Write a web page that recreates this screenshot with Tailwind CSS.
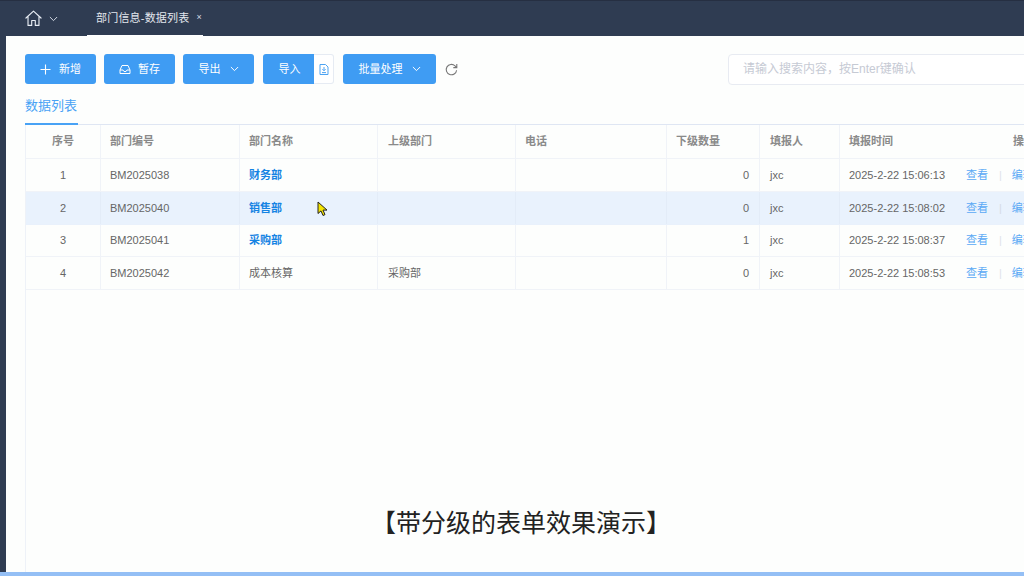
<!DOCTYPE html>
<html lang="zh-CN">
<head>
    <meta charset="UTF-8" />
    <meta name="viewport" content="width=device-width, initial-scale=1.0" />
    <script src="https://cdn.jsdelivr.net/npm/@tailwindcss/browser@4"></script>
    <title>部门信息-数据列表</title>
</head>
<body class="relative w-[1024px] h-[576px] overflow-hidden bg-[#2f3c52] font-['Liberation_Sans','Noto_Sans_CJK_SC',sans-serif]">
    <!-- top bar -->
    <div class="h-[36px] flex border-t border-[#262f42] border-b-[#4a5568]">
        <div class="flex items-center pl-[25px] w-[87px] gap-[7px]">
            <svg class="w-[17px] h-[17px] text-[#e8edf4]" viewBox="0 0 18 18" fill="none" stroke="currentColor" stroke-width="1.2" stroke-linejoin="round" stroke-linecap="round">
                <path d="M1 8.5 9 1.2l8 7.3M3.2 7v9.3h3.9v-5.2h3.8v5.2h3.9V7" />
            </svg>
            <svg class="w-[9px] h-[6px] text-[#d5dbe5]" viewBox="0 0 10 6" fill="none" stroke="currentColor" stroke-width="1.1"><path d="M1 .8l4 4 4-4" /></svg>
        </div>
        <div class="w-[116px] h-[35px] border-b-[1px] border-white flex items-center pl-[9px] text-[11px] text-[#e3e7ee] gap-[7px]">
            <span class="tracking-[0.2px]">部门信息-数据列表</span>
            <span class="text-[9px] text-[#d5dbe5]">×</span>
        </div>
    </div>

    <!-- main panel -->
    <div class="absolute left-[6px] top-[36px] w-[1018px] h-[536px] bg-[#fdfefd]">
        <div class="flex items-center h-[30px] ml-[19px] mt-[18px] absolute top-0 left-0 w-[999px]">
            <button class="shrink-0 w-[71px] h-[30px] rounded-[3px] bg-[#3f9cf3] text-white text-[11px] flex items-center justify-center gap-[8px]">
                <svg class="w-[11px] h-[11px]" viewBox="0 0 11 11" stroke="currentColor" stroke-width="1.1"><path d="M5.5.5v10M.5 5.5h10" /></svg>
                新增
            </button>
            <button class="shrink-0 ml-[8px] w-[71px] h-[30px] rounded-[3px] bg-[#3f9cf3] text-white text-[11px] flex items-center justify-center gap-[7px]">
                <svg class="w-[12px] h-[11px]" viewBox="0 0 12 11" fill="none" stroke="currentColor" stroke-width="1"><path d="M1 6l2-4.5h6L11 6v3.5H1zM1 6h3l1 1.5h2L8 6h3" /></svg>
                暂存
            </button>
            <button class="shrink-0 ml-[8px] w-[71px] h-[30px] rounded-[3px] bg-[#3f9cf3] text-white text-[11px] flex items-center justify-center gap-[9px]">
                导出
                <svg class="w-[9px] h-[6px]" viewBox="0 0 10 6" fill="none" stroke="currentColor" stroke-width="1.1"><path d="M1 .8l4 4 4-4" /></svg>
            </button>
            <div class="shrink-0 ml-[9px] flex h-[30px]">
                <button class="w-[51px] h-[30px] rounded-l-[3px] bg-[#3f9cf3] text-white text-[11px] pl-[2px]">导入</button>
                <button class="w-[20px] h-[30px] rounded-r-[3px] border border-l-0 border-[#e6ebf3] bg-white flex items-center justify-center">
                    <svg class="w-[10px] h-[11px] text-[#4da3f2]" viewBox="0 0 10 11" fill="none" stroke="currentColor" stroke-width="1"><path d="M1 .5h5.5L9 3v7.5H1z" /><path d="M5 3v3.4M3.4 5.2 5 6.8l1.6-1.6M3 8.6h4" /></svg>
                </button>
            </div>
            <button class="shrink-0 ml-[9px] w-[93px] h-[30px] rounded-[3px] bg-[#3f9cf3] text-white text-[11px] flex items-center justify-center gap-[9px]">
                批量处理
                <svg class="w-[9px] h-[6px]" viewBox="0 0 10 6" fill="none" stroke="currentColor" stroke-width="1.1"><path d="M1 .8l4 4 4-4" /></svg>
            </button>
            <svg class="shrink-0 ml-[9px] w-[13px] h-[13px] text-[#777]" viewBox="0 0 13 13" fill="none" stroke="currentColor" stroke-width="1.1"><path d="M11.6 7.2A5.2 5.2 0 1 1 10 2.8l1.6 1.6M11.8 1v3.6H8.3" /></svg>
            <div class="shrink-0 ml-[270px] w-[300px] h-[31px] rounded-[4px] border border-[#e8ebf2] bg-white flex items-center pl-[14px] text-[12px] text-[#c6cad4]">请输入搜索内容，按Enter键确认</div>
        </div>

        <!-- tab title -->
        <div class="absolute left-[19px] top-[60px] w-[999px] h-[29px] border-b border-[#dfe6f3] flex">
            <span class="w-[53px] h-[29px] shrink-0 border-b-2 border-[#48a2f5] text-[13px] leading-[20px] text-[#48a2f5]">数据列表</span>
        </div>

        <!-- table -->
        <div class="absolute left-[19px] top-[89px] w-[999px] h-[447px] border-l border-[#eef2f8] text-[11px] text-[#666]">
            <div class="grid grid-cols-[75px_139px_138px_138px_151px_93px_80px_117px_70px] h-[34px] border-b border-[#f0f3f8] items-center font-bold text-[#8a8a8a]">
                <div class="h-full flex items-center justify-center border-r border-[#f0f3f8]">序号</div>
                <div class="h-full flex items-center pl-[9px] border-r border-[#f0f3f8]">部门编号</div>
                <div class="h-full flex items-center pl-[9px] border-r border-[#f0f3f8]">部门名称</div>
                <div class="h-full flex items-center pl-[10px] border-r border-[#f0f3f8]">上级部门</div>
                <div class="h-full flex items-center pl-[9px] border-r border-[#f0f3f8]">电话</div>
                <div class="h-full flex items-center pl-[9px] border-r border-[#f0f3f8]">下级数量</div>
                <div class="h-full flex items-center pl-[10px] border-r border-[#f0f3f8]">填报人</div>
                <div class="h-full flex items-center pl-[9px]">填报时间</div>
                <div class="h-full flex items-center pl-[56px] whitespace-nowrap">操作</div>
            </div>

            <div class="grid grid-cols-[75px_139px_138px_138px_151px_93px_80px_117px_70px] h-[33px] border-b border-[#f0f3f8] items-center">
                <div class="h-full flex items-center justify-center border-r border-[#f0f3f8]">1</div>
                <div class="h-full flex items-center pl-[9px] border-r border-[#f0f3f8]">BM2025038</div>
                <div class="h-full flex items-center pl-[9px] border-r border-[#f0f3f8] font-bold text-[#1583e3]">财务部</div>
                <div class="h-full flex items-center pl-[10px] border-r border-[#f0f3f8]"></div>
                <div class="h-full flex items-center pl-[10px] border-r border-[#f0f3f8]"></div>
                <div class="h-full flex items-center justify-end pr-[10px] border-r border-[#f0f3f8]">0</div>
                <div class="h-full flex items-center pl-[10px] border-r border-[#f0f3f8]">jxc</div>
                <div class="h-full flex items-center pl-[9px] whitespace-nowrap">2025-2-22 15:06:13</div>
                <div class="h-full flex items-center pl-[9px] whitespace-nowrap text-[#5aa9f5]">查看<span class="ml-[11px] mr-[10px] text-[#dfe3ea]">|</span>编辑</div>
            </div>

            <div class="grid grid-cols-[75px_139px_138px_138px_151px_93px_80px_117px_70px] h-[33px] border-b border-[#e9f1fc] items-center bg-[#e9f2fd]">
                <div class="h-full flex items-center justify-center border-r border-[#e3ecf8]">2</div>
                <div class="h-full flex items-center pl-[9px] border-r border-[#e3ecf8]">BM2025040</div>
                <div class="h-full flex items-center pl-[9px] border-r border-[#e3ecf8] font-bold text-[#1583e3]">销售部</div>
                <div class="h-full flex items-center pl-[10px] border-r border-[#e3ecf8]"></div>
                <div class="h-full flex items-center pl-[10px] border-r border-[#e3ecf8]"></div>
                <div class="h-full flex items-center justify-end pr-[10px] border-r border-[#e3ecf8]">0</div>
                <div class="h-full flex items-center pl-[10px] border-r border-[#e3ecf8]">jxc</div>
                <div class="h-full flex items-center pl-[9px] whitespace-nowrap">2025-2-22 15:08:02</div>
                <div class="h-full flex items-center pl-[9px] whitespace-nowrap text-[#5aa9f5]">查看<span class="ml-[11px] mr-[10px] text-[#d5dbe5]">|</span>编辑</div>
            </div>

            <div class="grid grid-cols-[75px_139px_138px_138px_151px_93px_80px_117px_70px] h-[32px] border-b border-[#f0f3f8] items-center">
                <div class="h-full flex items-center justify-center border-r border-[#f0f3f8]">3</div>
                <div class="h-full flex items-center pl-[9px] border-r border-[#f0f3f8]">BM2025041</div>
                <div class="h-full flex items-center pl-[9px] border-r border-[#f0f3f8] font-bold text-[#1583e3]">采购部</div>
                <div class="h-full flex items-center pl-[10px] border-r border-[#f0f3f8]"></div>
                <div class="h-full flex items-center pl-[10px] border-r border-[#f0f3f8]"></div>
                <div class="h-full flex items-center justify-end pr-[10px] border-r border-[#f0f3f8]">1</div>
                <div class="h-full flex items-center pl-[10px] border-r border-[#f0f3f8]">jxc</div>
                <div class="h-full flex items-center pl-[9px] whitespace-nowrap">2025-2-22 15:08:37</div>
                <div class="h-full flex items-center pl-[9px] whitespace-nowrap text-[#5aa9f5]">查看<span class="ml-[11px] mr-[10px] text-[#dfe3ea]">|</span>编辑</div>
            </div>

            <div class="grid grid-cols-[75px_139px_138px_138px_151px_93px_80px_117px_70px] h-[33px] border-b border-[#f0f3f8] items-center">
                <div class="h-full flex items-center justify-center border-r border-[#f0f3f8]">4</div>
                <div class="h-full flex items-center pl-[9px] border-r border-[#f0f3f8]">BM2025042</div>
                <div class="h-full flex items-center pl-[9px] border-r border-[#f0f3f8]">成本核算</div>
                <div class="h-full flex items-center pl-[10px] border-r border-[#f0f3f8]">采购部</div>
                <div class="h-full flex items-center pl-[10px] border-r border-[#f0f3f8]"></div>
                <div class="h-full flex items-center justify-end pr-[10px] border-r border-[#f0f3f8]">0</div>
                <div class="h-full flex items-center pl-[10px] border-r border-[#f0f3f8]">jxc</div>
                <div class="h-full flex items-center pl-[9px] whitespace-nowrap">2025-2-22 15:08:53</div>
                <div class="h-full flex items-center pl-[9px] whitespace-nowrap text-[#5aa9f5]">查看<span class="ml-[11px] mr-[10px] text-[#dfe3ea]">|</span>编辑</div>
            </div>
        </div>
    </div>

    <!-- bottom bar -->
    <div class="absolute left-0 bottom-0 w-[1024px] h-[4px] bg-[#94bff5]"></div>

    <!-- caption over the recording -->
    <div class="absolute left-[371px] top-[507px] text-[25px] leading-[32px] whitespace-nowrap text-[#222]">【带分级的表单效果演示】</div>

    <!-- mouse pointer -->
    <svg class="absolute left-[317px] top-[201px] w-[12px] h-[16px]" viewBox="0 0 12 16">
        <path d="M1 1v11.5l3-2.6 2 4.6 2-.9-2-4.5h4z" fill="#f4e400" stroke="#222" stroke-width="1" />
    </svg>
</body>
</html>
